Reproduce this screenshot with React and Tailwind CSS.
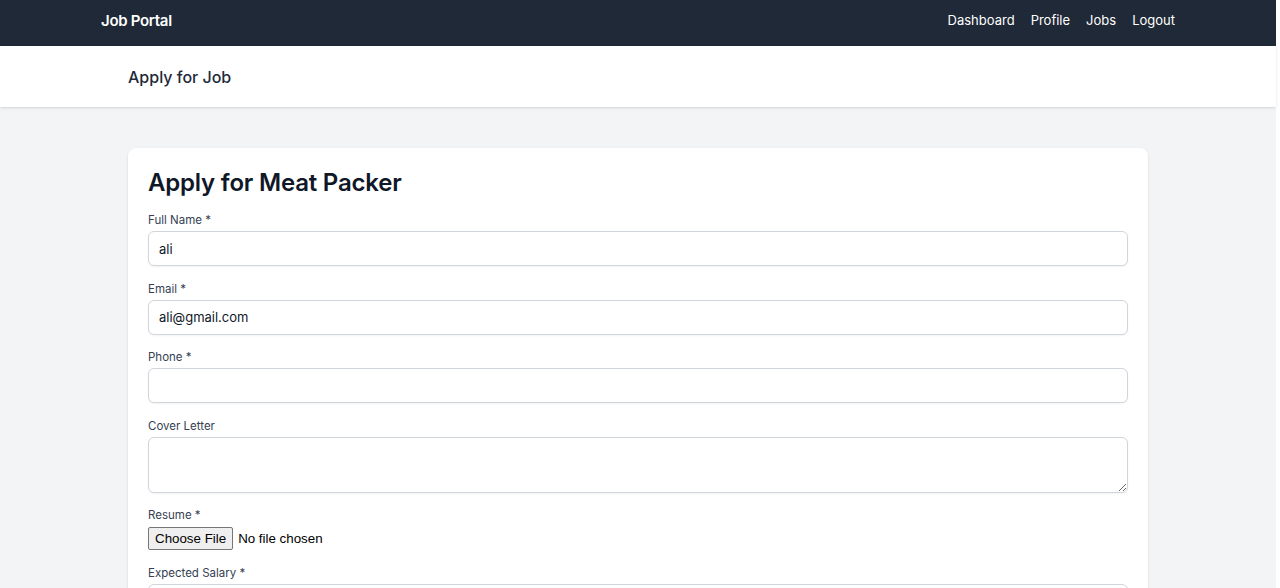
import React from 'react'

const font = { fontFamily: 'Inter, "Noto Sans", sans-serif' }

const Field = ({ label, children }) => (
  <div className="mb-[14.6px]">
    <label className="block text-[11.5px] leading-4 text-gray-700 mb-[3px]">{label}</label>
    {children}
  </div>
)

const TextInput = ({ value = '' }) => (
  <input
    type="text"
    readOnly
    defaultValue={value}
    className="block w-full h-[35px] rounded-md border border-gray-300 bg-white px-[10px] text-[13px] text-gray-900 shadow-xs outline-none"
  />
)

export default function App() {
  return (
    <div className="w-[1276px] min-h-screen bg-gray-100" style={font}>
      {/* Navbar */}
      <nav className="bg-[#1f2937] h-[46px] px-[101px] pb-[3px] flex items-center justify-between">
        <span className="text-white font-semibold text-[15px] tracking-[-0.3px]">Job Portal</span>
        <div className="flex items-center gap-4 text-[13px] text-white -mt-[1px]">
          <a href="#">Dashboard</a>
          <a href="#">Profile</a>
          <a href="#">Jobs</a>
          <a href="#">Logout</a>
        </div>
      </nav>

      {/* Page header */}
      <header className="bg-white shadow h-[61px] flex items-center pt-[1px]">
        <div className="w-[1020px] mx-auto">
          <h2 className="text-[16px] font-medium text-gray-800">Apply for Job</h2>
        </div>
      </header>

      {/* Form card */}
      <main className="pt-[41px] pb-10">
        <div className="w-[1020px] mx-auto bg-white rounded-lg shadow-sm px-5 pt-[19px] pb-6">
          <h1 className="text-[24px] leading-8 font-semibold text-gray-900 mb-[13px] tracking-[-0.2px]">Apply for Meat Packer</h1>

          <Field label="Full Name *">
            <TextInput value="ali" />
          </Field>
          <Field label="Email *">
            <TextInput value="ali@gmail.com" />
          </Field>
          <Field label="Phone *">
            <TextInput />
          </Field>
          <Field label="Cover Letter">
            <textarea
              readOnly
              className="block w-full h-[56px] rounded-md border border-gray-300 bg-white px-[10px] py-2 text-[13px] shadow-xs outline-none"
            />
          </Field>
          <div className="mb-[15px]">
            <label className="block text-[11.5px] leading-4 text-gray-700 mb-[4px]">Resume *</label>
            <div className="flex items-center gap-[5px]" style={{ fontFamily: '"Liberation Sans", Arial, sans-serif' }}>
              <span className="inline-flex items-center h-[23px] px-[6px] rounded-[2px] border border-[#767676] bg-[#efefef] text-[13.33px] text-black">
                Choose File
              </span>
              <span className="text-[13.33px] text-black">No file chosen</span>
            </div>
          </div>
          <Field label="Expected Salary *">
            <TextInput />
          </Field>
          <Field label="Availability">
            <TextInput />
          </Field>
        </div>
      </main>
    </div>
  )
}
